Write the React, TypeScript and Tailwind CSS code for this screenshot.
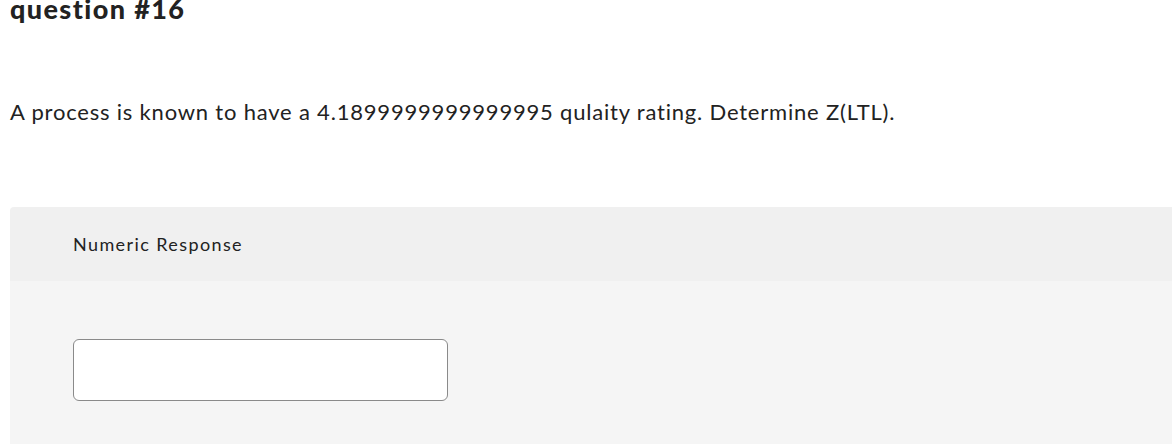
export default function App() {
  return (
    <div className="h-screen overflow-hidden bg-white text-[#222] font-['Lato',sans-serif]">
      <h1 className="-mt-[7px] h-[32px] pl-[10px] text-[27px] font-black leading-[32px] tracking-[1.4px]">
        question #16
      </h1>

      <p className="mt-[73px] h-[28px] pl-[10px] text-[22px] leading-[28px] tracking-[0.8px]">
        A process is known to have a 4.1899999999999995 qulaity rating. Determine Z(LTL).
      </p>

      <div className="ml-[10px] mt-[81px] overflow-hidden rounded-tl-[4px]">
        <div className="flex h-[74px] items-center bg-[#f0f0f0] pl-[63px]">
          <span className="text-[18px] leading-[24px] tracking-[1.4px]">Numeric Response</span>
        </div>
        <div className="h-[180px] bg-[#f5f5f5] pl-[63px] pt-[58px]">
          <input
            type="text"
            className="block h-[62px] w-[375px] rounded-[6px] border border-[#8a8a8a] bg-white px-3 text-[17px] outline-none"
          />
        </div>
      </div>
    </div>
  );
}
